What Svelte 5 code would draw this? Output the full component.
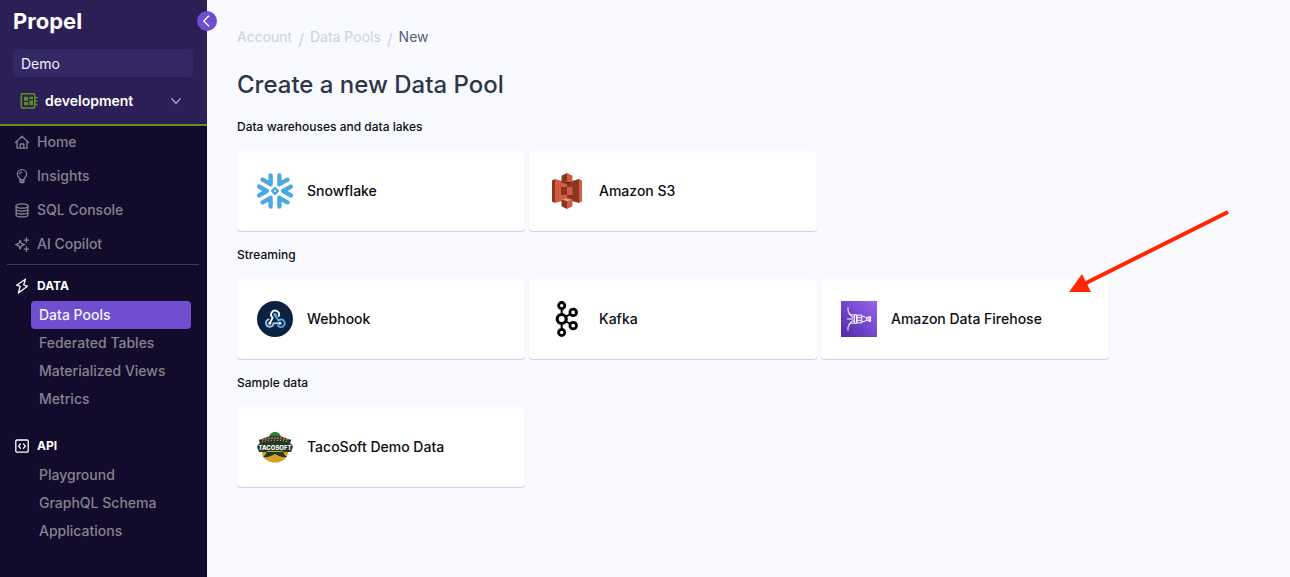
<!--
  New Data Pool page: sidebar with the account / environment pickers and nav,
  and a main pane listing every source a Data Pool can be created from.
-->
<script lang="ts">
  type Source = { id: string; name: string };

  let account = $state('Demo');
  let environment = $state('development');

  const mainLinks = [
    { id: 'home', label: 'Home' },
    { id: 'insights', label: 'Insights' },
    { id: 'sql', label: 'SQL Console' },
    { id: 'copilot', label: 'AI Copilot' },
  ];

  const navGroups = [
    { id: 'data', label: 'DATA', links: ['Data Pools', 'Federated Tables', 'Materialized Views', 'Metrics'] },
    { id: 'api', label: 'API', links: ['Playground', 'GraphQL Schema', 'Applications'] },
  ];
  const active = 'Data Pools';

  const sections: { title: string; sources: Source[] }[] = [
    {
      title: 'Data warehouses and data lakes',
      sources: [
        { id: 'snowflake', name: 'Snowflake' },
        { id: 's3', name: 'Amazon S3' },
      ],
    },
    {
      title: 'Streaming',
      sources: [
        { id: 'webhook', name: 'Webhook' },
        { id: 'kafka', name: 'Kafka' },
        { id: 'firehose', name: 'Amazon Data Firehose' },
      ],
    },
    { title: 'Sample data', sources: [{ id: 'tacosoft', name: 'TacoSoft Demo Data' }] },
  ];
</script>

{#snippet navIcon(id: string)}
  <svg class="nav-icon" viewBox="0 0 16 16" aria-hidden="true">
    {#if id === 'home'}
      <path d="M1.3 8.6 8 2.2l6.7 6.4M3 7.2v6.9h10V7.2M6.2 13.9V10h3.6v3.9" />
    {:else if id === 'insights'}
      <path d="M6 11.6C6 9.8 3.4 9 3.4 6.2a4.6 4.6 0 0 1 9.2 0c0 2.8-2.6 3.6-2.6 5.4zM6 11.6v2.1c0 .6.4 1 1 1h2c.6 0 1-.4 1-1v-2.1M6 13.2h4M5.7 6C5.8 4.8 6.6 4.1 7.7 4.1" />
    {:else if id === 'sql'}
      <ellipse cx="8" cy="4" rx="5.9" ry="2.2" />
      <path d="M2.1 4v8.7c0 1.2 2.6 2.2 5.9 2.2s5.9-1 5.9-2.2V4M2.1 7c0 1.1 2.6 2.1 5.9 2.1s5.9-1 5.9-2.1M2.1 9.9c0 1.1 2.6 2.1 5.9 2.1s5.9-1 5.9-2.1" />
    {:else if id === 'copilot'}
      <path d="M6.2 4.3 7.4 7.3 10.6 8.6 7.4 9.9 6.2 12.9 5 9.9 1.6 8.6 5 7.3z" />
      <path d="M12.4 2v4.4M10.2 4.2h4.4M12.4 11v4.4M10.2 13.2h4.4" />
    {:else if id === 'data'}
      <path d="M11.4 1.2 2.6 7.2l3.6 1.2L4.4 15l9-6.8L9.7 7z" />
    {:else if id === 'api'}
      <rect x="1.8" y="2" width="12.4" height="12.2" rx="1.2" />
      <path d="M6.5 6 4.6 8.1l1.9 2.1M9.5 6l1.9 2.1-1.9 2.1" />
    {/if}
  </svg>
{/snippet}

{#snippet logo(id: string)}
  <svg class="logo" viewBox="0 0 36 36" aria-hidden="true">
    {#if id === 'snowflake'}
      <g fill="none" stroke="#49a9e4" stroke-width="4.4" stroke-linecap="round" stroke-linejoin="round">
        <path d="M13.6 2.4v8.8L5.6 6.7M22.4 2.4v8.8l8-4.5M13.6 33.6v-8.8l-8 4.5M22.4 33.6v-8.8l8 4.5M2.2 13.6 9.8 18l-7.6 4.4M33.8 13.6 26.2 18l7.6 4.4" />
        <path stroke-width="2.4" d="M18 15.1 20.9 18 18 20.9 15.1 18z" />
      </g>
    {:else if id === 's3'}
      <path fill="#8b3622" d="M3 7.4 6 6v24l-3-1.4zM18 9.5l12-3.4v23.8l-12-3.4z" />
      <path fill="#cf5c43" d="M6 6l12 3.5v17L6 30zM30 6.1l3 1.3v21.2l-3 1.3z" />
      <path fill="#8b3622" d="M12 14h6v8h-6zM18 0l-5.5 2.8v6.6L18 8.2zM18 36l-5.5-2.8v-6.6l5.5 1.2z" />
      <path fill="#cf5c43" d="M18 0l5.5 2.8v6.6L18 8.2zM18 36l5.5-2.8v-6.6L18 27.8zM18 14h5.5v8H18z" />
      <path fill="#652718" d="M12.5 9.4 18 8.2l5.5 1.2L18 10.8z" />
      <path fill="#e8927f" d="M12.5 26.6 18 27.8l5.5-1.2L18 25.2z" />
    {:else if id === 'webhook'}
      <circle cx="18" cy="18" r="18" fill="#0b2142" />
      <g transform="translate(2.7 2.7) scale(.84)">
        <g fill="none" stroke-width="2.2" stroke-linecap="round">
          <path stroke="#fff" d="M22.7 14.6a4.7 4.7 0 1 0-7.3 2L12.8 22" />
          <path stroke="#51aeea" d="M18.3 13.4l4 6.7a4.5 4.5 0 1 1-.6 5.8" />
          <path stroke="#8fc9f2" d="M23.8 23.3h-7.3a4.5 4.5 0 1 1-5.7-4.7" />
        </g>
        <circle cx="18.3" cy="13.3" r="2.1" fill="#51aeea" />
        <circle cx="12" cy="23.3" r="1.8" fill="#fff" />
        <circle cx="24.3" cy="23.3" r="1.8" fill="#fff" />
      </g>
    {:else if id === 'kafka'}
      <g fill="none" stroke="#000" stroke-width="2.8">
        <circle cx="12.7" cy="4.6" r="3.1" />
        <circle cx="12.7" cy="18" r="4.5" stroke-width="3.2" />
        <circle cx="12.7" cy="31.4" r="3.1" />
        <circle cx="24.2" cy="11.4" r="3.3" />
        <circle cx="24.2" cy="24.6" r="3.3" />
        <path stroke-width="2" d="M12.7 7.5v6.2M12.7 22.3v6.2M16.6 15.8l4.8-2.8M16.6 20.2l4.8 2.8" />
      </g>
    {:else if id === 'firehose'}
      <defs>
        <linearGradient id="firehose-bg" x1="0" y1="1" x2="1" y2="0">
          <stop offset="0" stop-color="#4c2ba6" />
          <stop offset="1" stop-color="#9a63f2" />
        </linearGradient>
      </defs>
      <rect width="36" height="36" fill="url(#firehose-bg)" />
      <g fill="none" stroke="#fff" stroke-width="1">
        <path d="M7 6.5v3.4l2.6 4h4.6M7 29.5v-3.4l2.6-4h4.6M7.4 11.8l3.4 4.2h3.4M7.4 24.2l3.4-4.2h3.4M6 18h6.6" />
        <path d="M13.4 13.8h2.4v8.4h-2.4zM15.8 14.2h5v7.6h-5zM15.8 16.7h5M15.8 19.3h5M20.8 14.9l4.8 1.7v2.8l-4.8 1.7M25.6 16.6l4-1.1v5l-4-1.1M27 16.4v3.2M28.3 16v4" />
      </g>
    {:else if id === 'tacosoft'}
      <ellipse cx="18" cy="23" rx="13" ry="10.5" fill="#d3a125" />
      <path fill="#2f7d3b" d="M12 9c0-3.6 2.6-6 6-6s6 2.4 6 6z" />
      <path fill="#243a2a" d="M1.5 10.5C4.500 11.500 7.500 7 18 7s13.500 4.500 16.500 3.500l-2.500 6H4z" />
      <path fill="none" stroke="#d9653b" stroke-width="1.6" stroke-dasharray="2 1" d="M5 11c6-2.5 20-2.5 26 0" />
      <path fill="none" stroke="#eadfae" stroke-width=".8" stroke-dasharray="1 2" d="M5 13c7-2.3 19-2.3 26 0" />
      <path fill="#203b2e" d="M2 14.5h32l2 3-2 5.500H2l-2-5.500zM10 22c-1 4-3 5-4 6 4 1 8-1 12-3 4 2 8 4 12 3-1-1-3-2-4-6z" />
      <text x="18" y="21" text-anchor="middle" class="taco-text">TACOSOFT</text>
    {/if}
  </svg>
{/snippet}

<div class="app">
  <aside class="sidebar">
    <header class="brand">
      <a class="wordmark" href="#home">Propel</a>
      <input class="account" aria-label="Account" bind:value={account} />
      <label class="environment">
        <svg class="env-icon" viewBox="0 0 18 18" aria-hidden="true">
          <rect x="1.3" y="1.8" width="13.4" height="14.2" rx="1.6" />
          <path d="M15 5.5h2.6M15 9h2.6M15 12.5h2.6" />
          <path class="fill" d="M4 4.8h4.2v4H4zM9.4 4.8H13v2.3H9.4zM9.4 8.3H13v4.9H9.4zM4 10h4.2v3.2H4z" />
        </svg>
        <select aria-label="Environment" bind:value={environment}>
          <option>development</option>
          <option>production</option>
        </select>
        <svg class="chevron" viewBox="0 0 12 12" aria-hidden="true">
          <path d="M1.5 3.5 6 8.2l4.5-4.7" />
        </svg>
      </label>
      <button type="button" class="collapse" aria-label="Collapse sidebar">
        <svg viewBox="0 0 20 20" aria-hidden="true"><path d="M12 4.8 6.8 10l5.2 5.2" /></svg>
      </button>
    </header>

    <nav>
      <ul class="main-links">
        {#each mainLinks as link}
          <li><a href="#{link.id}">{@render navIcon(link.id)}{link.label}</a></li>
        {/each}
      </ul>
      <hr />
      {#each navGroups as group}
        <section class="group">
          <h2>{@render navIcon(group.id)}{group.label}</h2>
          <ul>
            {#each group.links as link}
              <li><a href="#{group.id}" class:active={link === active}>{link}</a></li>
            {/each}
          </ul>
        </section>
      {/each}
    </nav>
  </aside>

  <main>
    <nav class="breadcrumb" aria-label="Breadcrumb">
      <a href="#account">Account</a>
      <span class="slash">/</span>
      <a href="#data">Data Pools</a>
      <span class="slash">/</span>
      <span class="current">New</span>
    </nav>
    <h1>Create a new Data Pool</h1>

    {#each sections as section}
      <section class="sources">
        <h3>{section.title}</h3>
        <div class="cards">
          {#each section.sources as source}
            <button type="button" class="card">
              {@render logo(source.id)}
              {source.name}
              {#if source.id === 'firehose'}
                <svg class="pointer" viewBox="0 0 162 84" aria-hidden="true">
                  <path class="shaft" d="M159 3 17 74" />
                  <path class="head" d="M0 83 13 65 22 83z" />
                </svg>
              {/if}
            </button>
          {/each}
        </div>
      </section>
    {/each}
  </main>
</div>

<style>
  :global(body) {
    margin: 0;
    background: #f9faff;
  }
  .app {
    display: grid;
    grid-template-columns: 207px 1fr;
    min-height: 100vh;
    font-family: Inter, 'Liberation Sans', sans-serif;
    font-size: 14px;
    line-height: 20px;
  }
  a {
    color: inherit;
    text-decoration: none;
  }
  ul {
    list-style: none;
    margin: 0;
    padding: 0;
  }

  /* sidebar */
  .sidebar {
    background: #120b2c;
    color: #86828f;
    font-weight: 500;
  }
  .brand {
    position: relative;
    padding: 9px 14px 0 13px;
    background: #2b1f55;
    border-bottom: 2px solid #5f8f1f;
  }
  .wordmark {
    display: block;
    margin-bottom: 16px;
    color: #fff;
    font-size: 22px;
    font-weight: 700;
    line-height: 24px;
  }
  .account {
    display: block;
    box-sizing: border-box;
    width: 100%;
    height: 28px;
    padding: 0 8px;
    border: 0;
    border-radius: 4px;
    background: #342765;
    color: #f0eef6;
    font: inherit;
    font-weight: 400;
  }
  .environment {
    display: flex;
    align-items: center;
    height: 47px;
    padding: 0 11px 0 7px;
  }
  .environment select {
    flex: 1;
    min-width: 0;
    appearance: none;
    padding: 0 0 0 7px;
    border: 0;
    background: transparent;
    color: #fff;
    font: inherit;
    font-weight: 600;
  }
  .env-icon {
    width: 18px;
    height: 18px;
    fill: none;
    stroke: #5f8f1f;
    stroke-width: 1.6;
  }
  .env-icon .fill {
    fill: #5f8f1f;
    stroke: none;
  }
  .chevron {
    width: 12px;
    height: 12px;
    fill: none;
    stroke: #a9a3bd;
    stroke-width: 1.4;
    pointer-events: none;
  }
  .collapse {
    position: absolute;
    top: 11px;
    right: -10px;
    width: 20px;
    height: 20px;
    padding: 0;
    border: 0;
    border-radius: 50%;
    background: #6f4fd0;
  }
  .collapse svg {
    display: block;
    fill: none;
    stroke: #fff;
    stroke-width: 1.3;
  }

  .nav-icon {
    flex: none;
    width: 16px;
    height: 16px;
    fill: none;
    stroke: currentColor;
    stroke-width: 1.3;
    stroke-linejoin: round;
    stroke-linecap: round;
  }
  .main-links {
    display: grid;
    gap: 2px;
  }
  .main-links a {
    display: flex;
    align-items: center;
    gap: 7px;
    height: 32px;
    padding: 0 14px;
  }
  hr {
    margin: 4px 8px 6px 7px;
    border: 0;
    border-top: 1px solid #413b56;
  }
  .group {
    margin-bottom: 18px;
  }
  .group h2 {
    display: flex;
    align-items: center;
    gap: 7px;
    height: 30px;
    margin: 0;
    padding: 0 14px;
    color: #fff;
    font-size: 12px;
    font-weight: 700;
  }
  .group ul {
    padding: 0 16px 0 31px;
  }
  .group a {
    display: block;
    padding: 4px 8px;
    border-radius: 4px;
  }
  .group a.active {
    background: #6f4fd0;
    color: #f6f3ff;
  }

  /* main pane */
  main {
    min-width: 0;
    padding: 27px 30px;
  }
  .breadcrumb {
    display: flex;
    gap: 6px;
    color: #cbd1de;
  }
  .slash {
    font-size: 16px;
    line-height: 24px;
    height: 20px;
  }
  .current {
    color: #55607a;
  }
  h1 {
    margin: 22px 0 18px;
    color: #2d3648;
    font-size: 24px;
    font-weight: 500;
    line-height: 32px;
  }
  .sources {
    margin-bottom: 16px;
  }
  h3 {
    margin: 0 0 16px;
    color: #0c0c12;
    font-size: 12px;
    font-weight: 500;
    line-height: 16px;
  }
  .cards {
    display: flex;
    flex-wrap: wrap;
    gap: 4px;
  }
  .card {
    position: relative;
    display: flex;
    align-items: center;
    gap: 14px;
    width: 288px;
    height: 80px;
    padding: 0 20px;
    border: 0;
    border-radius: 4px;
    background: #fff;
    box-shadow: 0 1px 1px rgba(0, 0, 0, 0.18);
    color: #0c0c12;
    font: inherit;
    font-weight: 500;
  }
  .logo {
    flex: none;
    width: 36px;
    height: 36px;
  }
  .taco-text {
    fill: #fff;
    font-size: 6px;
    font-weight: 800;
  }
  .pointer {
    position: absolute;
    top: -70px;
    left: 248px;
    width: 162px;
    height: 84px;
    pointer-events: none;
  }
  .pointer .shaft {
    stroke: #ff2600;
    stroke-width: 4;
  }
  .pointer .head {
    fill: #ff2600;
  }
</style>
